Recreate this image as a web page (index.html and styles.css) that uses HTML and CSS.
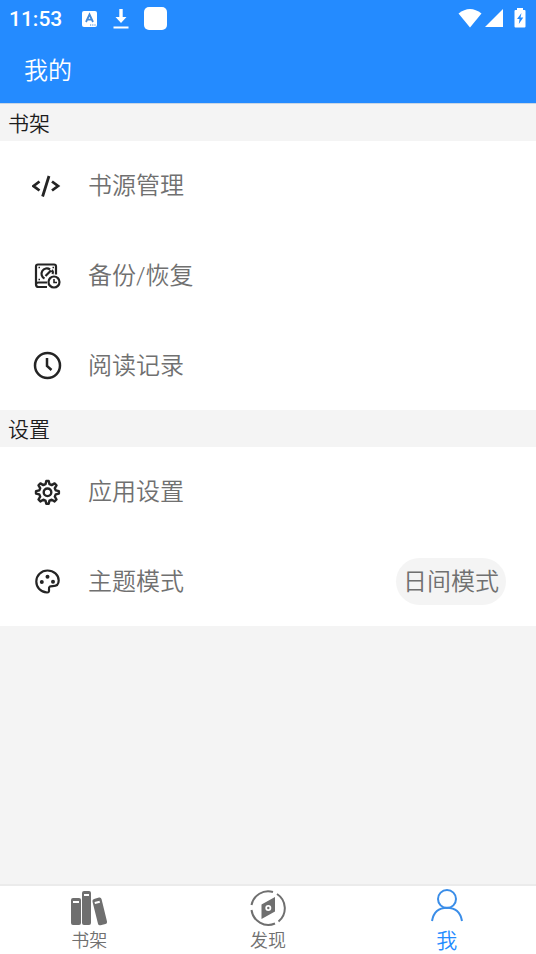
FILE: index.html
```html
<!DOCTYPE html>
<html lang="zh-CN">
<head>
<meta charset="utf-8">
<meta name="viewport" content="width=device-width, initial-scale=1">
<title>我的</title>
<link rel="stylesheet" href="styles.css">
</head>
<body>
<header class="top">
  <div class="status">
    <span class="time">11:53</span>
    <div class="notices">
      <svg width="16" height="16" viewBox="0 0 16 16"><rect width="15" height="16" rx="2" fill="#fff"/><path d="M4 11 7.500 3.500 11 11M5.200 8.700h4.600" fill="none" stroke="#4389d8" stroke-width="1.800"/><path d="M8 14h1.200m1 0h1.200m1 0h1.200" stroke="#4389d8"/></svg>
      <svg width="16" height="22" viewBox="0 0 16 22"><path d="M6.300 1h3.400v8h3.800L8 15 2.500 9h3.800zM.5 18.500h15v2H.5z" fill="#fff"/></svg>
      <svg width="23" height="23" viewBox="0 0 23 23"><rect width="23" height="23" rx="5" fill="#fff"/></svg>
    </div>
    <div class="signals">
      <svg width="24" height="20" viewBox="0 0 24 20"><path d="M.5 5.500Q12-3.500 23.500 5.500L12 19.500z" fill="#fff"/></svg>
      <svg width="20" height="20" viewBox="0 0 20 20"><path d="M19 1v18H1z" fill="#fff"/></svg>
      <svg class="battery" width="12" height="20" viewBox="0 0 12 20"><path d="M3 2V0h6v2h1.500q1 0 1 1v15.500q0 1-1 1h-9q-1 0-1-1V3q0-1 1-1z" fill="#fff"/><path d="M7.500 5 3 11h2.500L4.800 16 9.300 9.500H6.500z" fill="#248bff"/></svg>
    </div>
  </div>
  <h1 class="title">我的</h1>
</header>

<main class="content">
  <section>
    <h2 class="heading">书架</h2>
    <ul class="list">
      <li><a class="row" href="#source">
        <svg class="icon" viewBox="0 0 30 30" fill="none" stroke="#242424" stroke-width="2.800"><path d="M7.500 10.500 1.500 15l6 4.500M20 10.500l6 4.500-6 4.500M17 5 10.600 25.500"/></svg>
        <span>书源管理</span></a></li>
      <li><a class="row" href="#backup">
        <svg class="icon" viewBox="0 0 30 30" fill="none" stroke="#242424" stroke-width="2.200"><path d="M15 26H6.500Q4 26 4 23.500V5.500Q4 3.500 6 3.500h16Q24 3.500 24 5.500v8M4 23.500Q4 21.500 6.500 21.500H15"/><path d="M12.500 17.500A5.300 5.300 0 1 1 18 8.500M13.500 15l5.500-5.500M20 9q1.500 2 .5 4"/><circle cx="22" cy="21" r="5.500"/><path d="M22 18v3.500h3" stroke-width="1.600"/><path d="M6.500 6.500H8M20.500 6.500H22M6.500 18.500H8" stroke-width="1.500"/></svg>
        <span>备份/恢复</span></a></li>
      <li><a class="row" href="#history">
        <svg class="icon" viewBox="0 0 30 30" fill="none" stroke="#242424" stroke-width="2.500"><circle cx="15.500" cy="14.500" r="12.500"/><path d="M15 7v8l4.500 4"/></svg>
        <span>阅读记录</span></a></li>
    </ul>
  </section>
  <section>
    <h2 class="heading">设置</h2>
    <ul class="list">
      <li><a class="row" href="#settings">
        <svg class="icon" viewBox="0 0 30 30" fill="none" stroke="#242424" stroke-width="2.400" stroke-linejoin="round"><path d="M14.300 4h2.400l.8 3.200 2.200.9 2.900-1.700 1.900 1.900-1.700 2.900.9 2.200 3.200.8v2.400l-3.200.8-.9 2.200 1.700 2.900-1.900 1.900-2.900-1.700-2.200.9-.8 3.200h-2.400l-.8-3.200-2.200-.9-2.900 1.700-1.900-1.900 1.700-2.900-.9-2.200L4 16.600v-2.400l3.300-.8.9-2.200-1.700-2.900 1.900-1.900 2.900 1.700 2.200-.9z"/><circle cx="15.500" cy="15.300" r="3.800"/></svg>
        <span>应用设置</span></a></li>
      <li class="row">
        <svg class="icon" viewBox="0 0 30 30"><path d="M15 25.500C8.500 25 4.300 20.300 4.300 14.500 4.300 8.300 9.300 3.500 15.500 3.500s11.200 4.500 11.200 10c0 3.700-2.500 5.700-6 5.700-2.700 0-4 .3-3.700 3.300.2 1.800-.1 3-2 3z" fill="none" stroke="#242424" stroke-width="2.200"/><g fill="#242424"><circle cx="9.800" cy="15" r="2"/><circle cx="15.500" cy="9.800" r="2"/><circle cx="21" cy="14.800" r="2"/></g></svg>
        <span>主题模式</span>
        <button class="mode" type="button">日间模式</button></li>
    </ul>
  </section>
</main>

<nav class="tabs">
  <a class="tab" href="#shelf">
    <svg width="38" height="36" viewBox="0 0 38 36"><path fill="#6f6f6f" fill-rule="evenodd" d="M3 8h6q2 0 2 2v23q0 2-2 2H3q-2 0-2-2V10q0-2 2-2zm0 3v2h6v-2zM14 1h5q2 0 2 2v30q0 2-2 2h-5q-2 0-2-2V3q0-2 2-2zm0 3v2h5V4zM24 9l5-1.500q2-.5 2.500 1.500L37 31.500q.5 2-1.500 2.500l-5 1.200q-2 .5-2.500-1.500l-5.500-22Q22 9.500 24 9zm.5 3 .5 2 5-1.300-.5-2z"/></svg>
    <span>书架</span></a>
  <a class="tab" href="#discover">
    <svg width="38" height="36" viewBox="0 0 38 36"><g fill="none" stroke="#6f6f6f" stroke-width="2"><path d="M2.500 15A17 17 0 0 1 24 2M28 4A17 17 0 0 1 29.500 31.500M26 33.500A17 17 0 0 1 2.500 20"/></g><path fill="#6f6f6f" fill-rule="evenodd" d="M26 7v14.500L12.500 29V14.500zM19.300 15a3 3 0 1 0 0 6 3 3 0 0 0 0-6z"/><circle cx="19.300" cy="18" r="1.200" fill="#6f6f6f"/></svg>
    <span>发现</span></a>
  <a class="tab active" href="#me" aria-current="page">
    <svg width="34" height="34" viewBox="0 0 34 34" fill="none" stroke="#3a8de8" stroke-width="2"><circle cx="17" cy="11" r="9"/><path d="M2 33C3.500 24.500 9 19.800 17 19.800S30.500 24.500 32 33"/></svg>
    <span>我</span></a>
</nav>
</body>
</html>
```
FILE: styles.css
```css
* {
  box-sizing: border-box;
}

body {
  display: flex;
  flex-direction: column;
  min-height: 100vh;
  margin: 0;
  background: #f4f4f4;
  color: #707070;
  font-family: Roboto, "Noto Sans CJK SC", sans-serif;
  font-size: 24px;
  font-weight: 350;
  line-height: 32px;
}

a {
  color: inherit;
  text-decoration: none;
}

svg {
  display: block;
  flex: none;
}

.top {
  background: #248bff;
  border-bottom: 1px solid #c9d6e4;
  color: #fff;
}

.status {
  display: flex;
  align-items: center;
  height: 37px;
  padding: 0 10px 0 9px;
}

.time {
  font-size: 21px;
  font-weight: 500;
}

.notices {
  display: flex;
  align-items: center;
  gap: 15px;
  margin-left: 20px;
}

.signals {
  display: flex;
  gap: 2px;
  margin-left: auto;
  padding-bottom: 2px;
}

.battery {
  margin-left: 8px;
}

.title {
  margin: 0;
  padding: 18px 24px 16px;
  font-size: 24px;
  font-weight: 350;
}

.content {
  flex: 1;
}

.heading {
  margin: 0;
  padding: 4px 8px 1px;
  color: #1c1c1c;
  font-size: 21px;
  font-weight: 350;
}

.list {
  display: grid;
  gap: 1px;
  margin: 0;
  padding: 0;
  background: #fff;
  list-style: none;
}

.row {
  display: flex;
  align-items: center;
  min-height: 89px;
  padding: 0 30px 0 32px;
}

.icon {
  width: 30px;
  height: 30px;
  margin-right: 26px;
}

.mode {
  margin-left: auto;
  padding: 8px 7px 7px;
  border: 0;
  border-radius: 24px;
  background: #f4f4f4;
  color: inherit;
  font: inherit;
}

.tabs {
  display: grid;
  grid-template-columns: repeat(3, 1fr);
  border-top: 2px solid #ebebeb;
  background: #fff;
}

.tab {
  display: flex;
  flex-direction: column;
  align-items: center;
  justify-content: space-between;
  height: 68px;
  padding: 4px 0 1px;
  font-size: 18px;
  line-height: 24px;
}

.active {
  padding-top: 2px;
  color: #248bff;
  font-size: 21px;
}
```
